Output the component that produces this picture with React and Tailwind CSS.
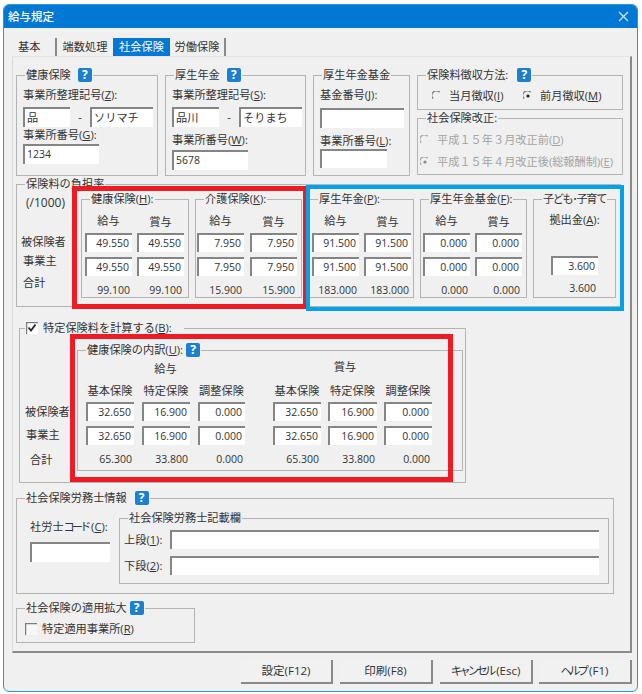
const Help = ({ className = "" }) => (
  <span className={`inline-flex h-[14px] w-[14px] shrink-0 items-center justify-center rounded-[2px] bg-[#1c80cf] text-[12px] font-bold leading-none text-white ${className}`}>?</span>
);

const Group = ({ legend, className = "", legendClass = "ml-[8px]", children }) => (
  <fieldset className={`border border-[#b4b4b4] ${className}`}>
    <legend className={`flex h-[14px] items-center whitespace-nowrap px-[1px] leading-[14px] ${legendClass}`}>{legend}</legend>
    {children}
  </fieldset>
);

const Box = ({ className = "", right = false, children }) => (
  <div className={`flex items-center whitespace-nowrap border-l-2 border-t-2 border-[#858585] bg-white ${right ? "justify-end pr-[3px] text-[10.5px]" : "pl-[2px]"} ${className}`}>
    {children}
  </div>
);

const Num = ({ className = "", children }) => (
  <div className={`h-[14px] pr-[2px] text-right text-[10.5px] leading-[14px] ${className}`}>{children}</div>
);

const Label = ({ className = "", children }) => (
  <div className={`h-[14px] whitespace-nowrap leading-[14px] ${className}`}>{children}</div>
);

const Radio = ({ checked = false, disabled = false }) => (
  <svg width="10" height="10" viewBox="0 0 10 10" className="shrink-0">
    <circle cx="5" cy="5" r="4.5" fill="#f0f0f0" />
    <path d="M1.2 7.6A4.4 4.4 0 0 1 7.6 1.2" fill="none" stroke={disabled ? "#a8a8a8" : "#7d7d7d"} strokeWidth="1.3" />
    {checked && <circle cx="5" cy="5" r="1.6" fill={disabled ? "#8a8a8a" : "#222"} />}
  </svg>
);

const Check = ({ checked = false }) => (
  <svg width="12" height="12" viewBox="0 0 12 12" className="shrink-0">
    <rect width="12" height="12" fill={checked ? "#ffffff" : "#f8f8f8"} />
    <path d="M0.6 12V0.6H12" fill="none" stroke="#7d7d7d" strokeWidth="1.3" />
    {checked && <path d="M2.5 5.5 5 8.5 9.5 2.5" fill="none" stroke="#222" strokeWidth="1.8" />}
  </svg>
);

const RateGroup = ({ legend, className, pad, gap, vals, totals }) => (
  <Group legend={legend} className={`mt-[1px] h-[106px] shrink-0 ${className}`}>
    <div className={`pt-[8px] ${pad}`}>
      <div className={`grid grid-cols-[47px_47px] ${gap}`}>
        <Label className="text-center">給与</Label>
        <Label className="mt-[1px] text-center">賞与</Label>
      </div>
      <div className={`mt-[4px] grid grid-cols-[47px_47px] gap-y-[5px] ${gap}`}>
        {[vals, vals, vals, vals].map((v, i) => (
          <Box key={i} right className="h-[19px]">{v}</Box>
        ))}
      </div>
      <div className={`mt-[7px] grid grid-cols-[47px_47px] ${gap}`}>
        <Num>{totals}</Num>
        <Num>{totals}</Num>
      </div>
    </div>
  </Group>
);

const Breakdown = ({ cols, heads = ["基本保険", "特定保険", "調整保険"], gap }) => (
  <div>
    <div className={`grid ${cols} ${gap}`}>
      {heads.map((h) => <Label key={h} className="text-center">{h}</Label>)}
    </div>
    <div className={`mt-[4px] grid gap-y-[5px] ${cols} ${gap}`}>
      <Box right className="h-[19px]">32.650</Box>
      <Box right className="h-[19px]">16.900</Box>
      <Box right className="h-[19px]">0.000</Box>
      <Box right className="h-[19px]">32.650</Box>
      <Box right className="h-[19px]">16.900</Box>
      <Box right className="h-[19px]">0.000</Box>
    </div>
    <div className={`mt-[7px] grid ${cols} ${gap}`}>
      <Num>65.300</Num>
      <Num>33.800</Num>
      <Num>0.000</Num>
    </div>
  </div>
);

const Btn = ({ className = "", children }) => (
  <div className={`flex h-[24px] items-center justify-center border-b-2 border-r-2 border-[#8a8a8a] bg-[#f1f1f1] text-[11.5px] ${className}`}>{children}</div>
);

export default function App() {
  return (
    <div className="relative h-[694px] w-[642px] overflow-hidden bg-white pl-[3px] pt-[4px] font-['Open_Sans','Noto_Sans_CJK_JP',sans-serif] text-[11.2px] text-[#333333]">
      <div className="h-[688px] w-[635px] overflow-hidden rounded-[6px] border border-[#2f93d8] bg-[#f0f0f0]">
        <div className="flex h-[23px] items-center justify-between bg-[#0078d4] pl-[4px] pr-[8px] text-[11.5px] font-medium text-white">
          <span>給与規定</span>
          <svg width="11" height="11" viewBox="0 0 11 11"><path d="M1 1l9 9M10 1l-9 9" stroke="#d5e8f7" strokeWidth="1.2" fill="none" /></svg>
        </div>

        <div className="ml-[9px] mt-[10px] flex h-[18px] items-stretch">
          <div className="flex w-[44px] items-center border-r-2 border-[#8a8a8a] pl-[5px]">基本</div>
          <div className="flex w-[56px] items-center justify-center">端数処理</div>
          <div className="flex w-[57px] items-center justify-center bg-[#0078d4] text-white">社会保険</div>
          <div className="flex w-[56px] items-center justify-center border-r-2 border-[#8a8a8a]">労働保険</div>
        </div>

        <div className="ml-[8px] h-[597px] w-[620px] border-b-2 border-l border-r-2 border-t border-b-[#8a8a8a] border-l-[#dcdcdc] border-r-[#8a8a8a] border-t-[#e4e4e4] pl-[3px] pt-[11px]">
          {/* row 1 */}
          <div className="flex gap-x-[7px]">
            <Group className="h-[108px] w-[142px]" legend={<><span>健康保険</span><Help className="ml-[7px]" /></>}>
              <Label className="ml-[6px] mt-[6px]">事業所整理記号(<u>Z</u>):</Label>
              <div className="ml-[6px] mt-[5px] flex items-center">
                <Box className="h-[20px] w-[47px]">品</Box>
                <span className="w-[20px] text-center">-</span>
                <Box className="h-[20px] w-[63px]">ソリマチ</Box>
              </div>
              <Label className="ml-[6px] mt-[1px]">事業所番号(<u>G</u>):</Label>
              <Box className="ml-[6px] mt-[2px] h-[20px] w-[76px] text-[10.5px]">1234</Box>
            </Group>
            <Group className="h-[108px] w-[141px]" legend={<><span>厚生年金</span><Help className="ml-[7px]" /></>}>
              <Label className="ml-[6px] mt-[6px]">事業所整理記号(<u>S</u>):</Label>
              <div className="ml-[6px] mt-[5px] flex items-center">
                <Box className="h-[20px] w-[47px]">品川</Box>
                <span className="w-[20px] text-center">-</span>
                <Box className="h-[20px] w-[63px]">そりまち</Box>
              </div>
              <Label className="ml-[6px] mt-[6px]">事業所番号(<u>W</u>):</Label>
              <Box className="ml-[6px] mt-[3px] h-[20px] w-[76px] text-[10.5px]">5678</Box>
            </Group>
            <Group className="h-[108px] w-[97px]" legend="厚生年金基金">
              <Label className="ml-[6px] mt-[6px]">基金番号(<u>J</u>):</Label>
              <Box className="ml-[6px] mt-[6px] h-[20px] w-[84px]" />
              <Label className="ml-[6px] mt-[6px]">事業所番号(<u>L</u>):</Label>
              <Box className="ml-[6px] mt-[1px] h-[19px] w-[67px]" />
            </Group>
            <div className="w-[206px]">
              <Group className="h-[42px]" legend={<><span>保険料徴収方法:</span><Help className="ml-[9px]" /></>}>
                <div className="mt-[7px] flex h-[14px] pl-[14px]">
                  <div className="flex w-[91px] items-center gap-x-[7px]"><Radio /><span>当月徴収(<u>I</u>)</span></div>
                  <div className="flex items-center gap-x-[7px]"><Radio checked /><span>前月徴収(<u>M</u>)</span></div>
                </div>
              </Group>
              <Group className="mt-[1px] h-[64px]" legend="社会保険改正:">
                <div className="mt-[8px] flex h-[14px] items-center gap-x-[7px] pl-[2px] text-[#a3a3a3]"><Radio disabled /><span>平成１５年３月改正前(<u>D</u>)</span></div>
                <div className="mt-[8px] flex h-[14px] items-center gap-x-[7px] whitespace-nowrap pl-[2px] text-[#a3a3a3]"><Radio checked disabled /><span>平成１５年４月改正後(総報酬制)(<u>E</u>)</span></div>
              </Group>
            </div>
          </div>

          {/* row 2 */}
          <Group className="mt-[1px] h-[130px] w-[605px]" legend="保険料の負担率">
            <div className="flex">
              <div className="w-[64px] shrink-0">
                <Label className="mt-[5px] pl-[9px] text-[12px]">(/1000)</Label>
                <Label className="mt-[25px] pl-[4px]">被保険者</Label>
                <Label className="mt-[5px] pl-[6px]">事業主</Label>
                <Label className="mt-[8px] pl-[6px]">合計</Label>
              </div>
              <div className="flex">
                <RateGroup className="w-[108px]" pad="pl-[3px]" gap="gap-x-[5px]" vals="49.550" totals="99.100" legend={<span>健康保険(<u>H</u>):</span>} />
                <RateGroup className="ml-[6px] w-[107px]" pad="pl-[1px]" gap="gap-x-[6px]" vals="7.950" totals="15.900" legend={<span>介護保険(<u>K</u>):</span>} />
                <RateGroup className="ml-[7px] w-[105px]" pad="pl-[2px]" gap="gap-x-[5px]" vals="91.500" totals="183.000" legend={<span>厚生年金(<u>P</u>):</span>} />
                <RateGroup className="ml-[6px] w-[107px]" pad="pl-[2px]" gap="gap-x-[5px]" vals="0.000" totals="0.000" legend={<span>厚生年金基金(<u>F</u>):</span>} />
                <Group className="ml-[6px] mt-[1px] h-[106px] w-[83px] shrink-0" legend={<span className="tracking-[-1.4px]">子ども･子育て</span>}>
                  <Label className="mt-[7px] text-center">拠出金(<u>A</u>):</Label>
                  <Box right className="ml-[17px] mt-[29px] h-[19px] w-[47px]">3.600</Box>
                  <Num className="ml-[17px] mt-[6px] w-[47px]">3.600</Num>
                </Group>
              </div>
            </div>
          </Group>

          {/* row 3 */}
          <Group
            className="ml-[3px] mt-[14px] h-[162px] w-[447px]"
            legendClass="ml-[5px]"
            legend={<span className="flex w-[157px] items-center gap-x-[5px]"><Check checked /><span>特定保険料を計算する(<u>B</u>):</span></span>}
          >
            <div className="flex">
              <div className="w-[57px] shrink-0">
                <Label className="mt-[70px] pl-[5px]">被保険者</Label>
                <Label className="mt-[9px] pl-[6px]">事業主</Label>
                <Label className="mt-[11px] pl-[10px]">合計</Label>
              </div>
              <Group
                className="mt-[8px] h-[128px] w-[386px] shrink-0"
                legend={<><span>健康保険の内訳(<u>U</u>):</span><Help className="ml-[3px]" /></>}
              >
                <div className="flex gap-x-[28px] pl-[8px]">
                  <div>
                    <Label className="mt-[5px] text-center">給与</Label>
                    <div className="mt-[8px]"><Breakdown cols="grid-cols-[48px_48px_47px]" gap="gap-x-[8px]" /></div>
                  </div>
                  <div>
                    <Label className="mt-[3px] pr-[15px] text-center">賞与</Label>
                    <div className="mt-[10px]"><Breakdown cols="grid-cols-[48px_49px_48px]" gap="gap-x-[7px]" /></div>
                  </div>
                </div>
              </Group>
            </div>
          </Group>

          {/* row 4 */}
          <Group className="mt-[8px] h-[103px] w-[598px]" legend={<><span>社会保険労務士情報</span><Help className="ml-[8px]" /></>}>
            <div className="flex">
              <div className="w-[102px] shrink-0">
                <Label className="ml-[13px] mt-[15px]">社労士<span className="tracking-[-3px]">コード</span>&nbsp;(<u>C</u>):</Label>
                <Box className="ml-[13px] mt-[8px] h-[20px] w-[80px]" />
              </div>
              <Group className="mt-[6px] h-[73px] w-[490px] shrink-0" legend="社会保険労務士記載欄">
                <div className="mt-[5px] flex items-center">
                  <Label className="w-[50px] shrink-0 pl-[4px]">上段(<u>1</u>):</Label>
                  <Box className="h-[19px] w-[429px]" />
                </div>
                <div className="mt-[7px] flex items-center">
                  <Label className="w-[50px] shrink-0 pl-[4px]">下段(<u>2</u>):</Label>
                  <Box className="h-[19px] w-[429px]" />
                </div>
              </Group>
            </div>
          </Group>

          {/* row 5 */}
          <Group className="mt-[7px] h-[42px] w-[179px]" legend={<><span>社会保険の適用拡大</span><Help className="ml-[3px]" /></>}>
            <div className="mt-[7px] flex h-[14px] items-center gap-x-[5px] pl-[8px]"><Check /><span>特定適用事業所(<u>R</u>)</span></div>
          </Group>
        </div>

        <div className="mt-[7px] flex justify-end gap-x-[7px] pr-[5px]">
          <Btn className="w-[92px]">設定(F12)</Btn>
          <Btn className="w-[93px]">印刷(F8)</Btn>
          <Btn className="w-[93px]"><span><span className="tracking-[-3px]">キャンセル</span>&nbsp;(Esc)</span></Btn>
          <Btn className="-ml-[1px] w-[93px]"><span><span className="tracking-[-3px]">ヘルプ</span>&nbsp;(F1)</span></Btn>
        </div>
      </div>

      {/* annotations laid over the dialog */}
      <div className="absolute left-[72px] top-[186px] h-[123px] w-[236px] border-[5px] border-[#ed1c24]" />
      <div className="absolute left-[306px] top-[185px] h-[126px] w-[318px] border-[4px] border-[#00a2e8]" />
      <div className="absolute left-[70px] top-[334px] h-[148px] w-[383px] border-[5px] border-[#ed1c24]" />
    </div>
  );
}
